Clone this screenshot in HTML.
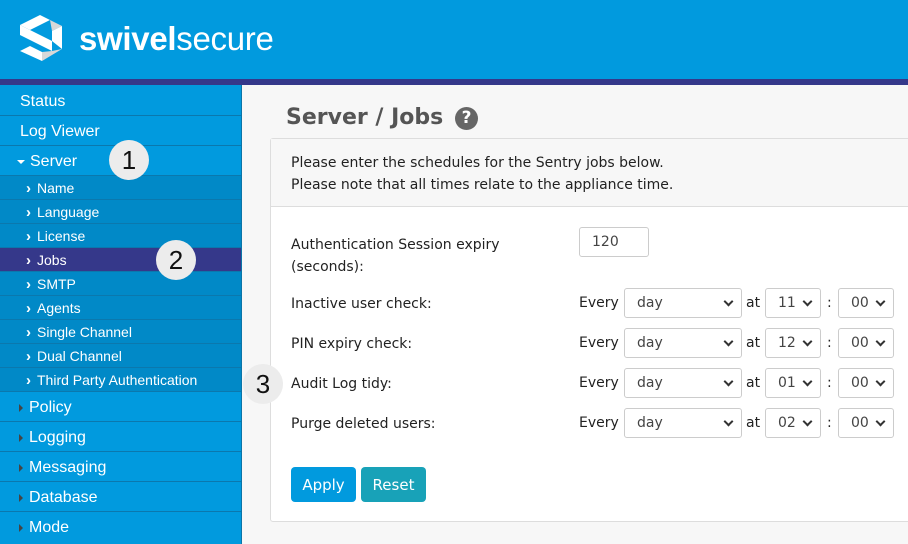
<!DOCTYPE html>
<html><head><style>
*{margin:0;padding:0;box-sizing:border-box}
body{width:908px;height:544px;overflow:hidden;background:#f7f7f7;font-family:"Liberation Sans",Arial,sans-serif;position:relative}
#hdr{position:absolute;left:0;top:0;width:908px;height:79px;background:#019ade}
#bar{position:absolute;left:0;top:79px;width:908px;height:6px;background:#35388a}
#side{position:absolute;left:0;top:85px;width:242px;height:459px;background:#019ade;border-right:1px solid #0b75a8;padding-top:1px}
.it{height:30px;line-height:32px;color:#fff;font-size:16px;padding-left:20px;border-bottom:1px solid #0b78ad;position:relative}
.sub{height:24px;line-height:25px;color:#fff;font-size:14px;padding-left:37px;background:#0189c7;border-bottom:1px solid #0b78ad;position:relative}
.sub:before{content:"›";position:absolute;left:26px;top:0px;font-weight:bold;font-size:15px}
.sub.act{background:#35388a}
.tri{position:absolute;left:19px;top:12px;width:0;height:0;border-left:4px solid #444;border-top:4px solid transparent;border-bottom:4px solid transparent}
.badge{position:absolute;width:40px;height:40px;border-radius:50%;background:#ececec;color:#111;font-size:26px;text-align:center;line-height:40px;font-family:"Liberation Sans",Arial,sans-serif;z-index:5}
#ttl{position:absolute;left:286px;top:105px;font:bold 22px "DejaVu Sans",Verdana,sans-serif;color:#555}
#q{position:absolute;left:455px;top:107px;width:23px;height:23px;border-radius:50%;background:#666;color:#fff;font:bold 17px "DejaVu Sans",sans-serif;text-align:center;line-height:23px}
#panel{position:absolute;left:270px;top:138px;width:650px;height:384px;background:#fff;border:1px solid #ddd;border-radius:3px}
#ph{height:68px;background:#f7f7f7;border-bottom:1px solid #ddd;padding:13px 0 0 20px;font:14px/22px "DejaVu Sans",Verdana,sans-serif;color:#222}
.f{position:absolute;font:14px "DejaVu Sans",Verdana,sans-serif;color:#222}
.sel{position:absolute;height:30px;border:1px solid #ccc;border-radius:3px;background:#fff;font:14px/28px "DejaVu Sans",sans-serif;color:#444;padding-left:12px}
.sel:after{content:"";position:absolute;right:9px;top:9px;width:5px;height:5px;border-right:2px solid #333;border-bottom:2px solid #333;transform:rotate(45deg)}
.sel.n:after{display:none}
.btn{position:absolute;top:467px;height:35px;width:65px;border-radius:4px;color:#fff;font:15px/36px "DejaVu Sans",sans-serif;text-align:center}
</style></head><body>
<div id="hdr">
<svg style="position:absolute;left:18px;top:13px" width="46" height="50" viewBox="0 0 46 50">
<polygon points="2,12 22,2 32,7 12,17" fill="#fff"/>
<polygon points="22,2 44,13 34,18 32,7" fill="#d8d8d8"/>
<polygon points="2,12 12,17 12,27 2,22" fill="#fff"/>
<polygon points="12,17 34,28 34,38 12,27" fill="#fff"/>
<polygon points="34,18 44,13 44,36 34,28" fill="#fff"/>
<polygon points="2,38 12,33 24,39 24,48" fill="#fff"/>
<polygon points="24,48 24,39 34,38 44,36" fill="#d8d8d8"/>
</svg>
<div style="position:absolute;left:79px;top:20px;color:#fff;font-size:33px;letter-spacing:-0.3px;font-family:'Liberation Sans',sans-serif"><b style="font-weight:bold">swivel</b><span style="font-weight:normal">secure</span></div>
</div>
<div id="bar"></div>
<div id="side">
<div class="it">Status</div>
<div class="it">Log Viewer</div>
<div class="it" style="padding-left:30px"><span style="position:absolute;left:17px;top:14px;border-top:4px solid #fff;border-left:4px solid transparent;border-right:4px solid transparent"></span>Server</div>
<div class="sub">Name</div><div class="sub">Language</div><div class="sub">License</div>
<div class="sub act">Jobs</div><div class="sub">SMTP</div><div class="sub">Agents</div>
<div class="sub">Single Channel</div><div class="sub">Dual Channel</div><div class="sub">Third Party Authentication</div>
<div class="it" style="padding-left:29px"><span class="tri"></span>Policy</div>
<div class="it" style="padding-left:29px"><span class="tri"></span>Logging</div>
<div class="it" style="padding-left:29px"><span class="tri"></span>Messaging</div>
<div class="it" style="padding-left:29px"><span class="tri"></span>Database</div>
<div class="it" style="padding-left:29px;border:none"><span class="tri"></span>Mode</div>
</div>
<div class="badge" style="left:109px;top:140px">1</div>
<div class="badge" style="left:156px;top:240px">2</div>
<div id="ttl">Server / Jobs</div><div id="q">?</div>
<div id="panel"><div id="ph">Please enter the schedules for the Sentry jobs below.<br>Please note that all times relate to the appliance time.</div></div>
<div class="badge" style="left:243px;top:364px">3</div>
<div class="f" style="left:291px;top:234px;line-height:22px">Authentication Session expiry<br>(seconds):</div>
<div class="sel n" style="left:579px;top:227px;width:70px">120</div>
<div class="f" style="left:291px;top:296px">Inactive user check:</div>
<div class="f" style="left:291px;top:336px">PIN expiry check:</div>
<div class="f" style="left:291px;top:376px">Audit Log tidy:</div>
<div class="f" style="left:291px;top:416px">Purge deleted users:</div>

<div class="f" style="left:579px;top:295px">Every</div><div class="sel" style="left:624px;top:288px;width:118px">day</div><div class="f" style="left:746px;top:295px">at</div><div class="sel" style="left:765px;top:288px;width:56px">11</div><div class="f" style="left:827px;top:295px">:</div><div class="sel" style="left:838px;top:288px;width:56px">00</div>
<div class="f" style="left:579px;top:335px">Every</div><div class="sel" style="left:624px;top:328px;width:118px">day</div><div class="f" style="left:746px;top:335px">at</div><div class="sel" style="left:765px;top:328px;width:56px">12</div><div class="f" style="left:827px;top:335px">:</div><div class="sel" style="left:838px;top:328px;width:56px">00</div>
<div class="f" style="left:579px;top:375px">Every</div><div class="sel" style="left:624px;top:368px;width:118px">day</div><div class="f" style="left:746px;top:375px">at</div><div class="sel" style="left:765px;top:368px;width:56px">01</div><div class="f" style="left:827px;top:375px">:</div><div class="sel" style="left:838px;top:368px;width:56px">00</div>
<div class="f" style="left:579px;top:415px">Every</div><div class="sel" style="left:624px;top:408px;width:118px">day</div><div class="f" style="left:746px;top:415px">at</div><div class="sel" style="left:765px;top:408px;width:56px">02</div><div class="f" style="left:827px;top:415px">:</div><div class="sel" style="left:838px;top:408px;width:56px">00</div>
<div class="btn" style="left:291px;background:#019ade">Apply</div>
<div class="btn" style="left:361px;background:#18a2b8">Reset</div>
</body></html>
